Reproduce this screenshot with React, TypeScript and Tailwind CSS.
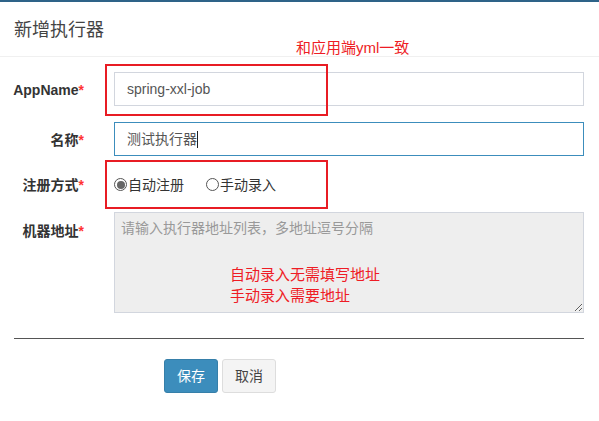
import React from "react";

const font = { fontFamily: '"Liberation Sans", "Noto Sans CJK SC", Arial, sans-serif' };

function Label({ children }: { children: React.ReactNode }) {
  return (
    <div className="w-[71px] shrink-0 text-right text-[14px] font-bold text-[#333] leading-[20px] whitespace-nowrap pt-[2px]">
      {children}
      <span className="text-[#f33]">*</span>
    </div>
  );
}

function Radio({ checked, label }: { checked?: boolean; label: string }) {
  return (
    <div className="flex items-center text-[14px] text-[#333] leading-[20px]">
      <span className="w-[13px] h-[13px] rounded-full border border-[#555] bg-white flex items-center justify-center mr-[1px]">
        {checked && <span className="w-[8px] h-[8px] rounded-full bg-[#666]" />}
      </span>
      {label}
    </div>
  );
}

export default function App() {
  return (
    <div className="relative w-[599px] h-[421px] bg-white overflow-hidden" style={font}>
      <div className="h-[2px] bg-[#2e6388]" />
      <div className="h-[55px] border-b border-[#f0f0f0] pl-[14px] flex items-center">
        <div className="text-[18px] text-[#444] leading-[24px] pt-[2px]">新增执行器</div>
      </div>

      <div className="pl-[13px] pr-[15px] pt-[15px]">
        <div className="flex items-center h-[34px]">
          <Label>AppName</Label>
          <div className="ml-[30px] flex-1 h-[34px] border border-[#d2d6de] flex items-center pl-[12px] text-[14px] text-[#555]">
            spring-xxl-job
          </div>
        </div>

        <div className="flex items-center h-[34px] mt-[16px]">
          <Label>名称</Label>
          <div className="ml-[30px] flex-1 h-[34px] border border-[#3c8dbc] flex items-center pl-[12px] text-[14px] text-[#555]">
            测试执行器<span className="inline-block w-[1px] h-[17px] bg-[#222]" />
          </div>
        </div>

        <div className="flex items-center h-[24px] mt-[16px]">
          <Label>注册方式</Label>
          <div className="ml-[30px] flex items-center gap-[22px] pt-[1px]">
            <Radio checked label="自动注册" />
            <Radio label="手动录入" />
          </div>
        </div>

        <div className="flex items-start mt-[16px]">
          <div className="pt-[7px]">
            <Label>机器地址</Label>
          </div>
          <textarea
            readOnly
            placeholder="请输入执行器地址列表，多地址逗号分隔"
            className="ml-[30px] flex-1 h-[101px] bg-[#eeeeee] border border-[#d2d6de] px-[6px] py-[5px] text-[14px] leading-[20px] text-[#555] placeholder:text-[#999] outline-none"
            style={font}
          />
        </div>

        <div className="mt-[25px] ml-[1px] h-[1px] bg-[#555]" />

        <div className="flex gap-[4px] mt-[20px] ml-[151px]">
          <button className="w-[54px] h-[34px] rounded-[3px] bg-[#3c8dbc] border border-[#367fa9] text-white text-[14px]">
            保存
          </button>
          <button className="w-[54px] h-[34px] rounded-[3px] bg-[#f4f4f4] border border-[#ddd] text-[#444] text-[14px]">
            取消
          </button>
        </div>
      </div>

      {/* annotations */}
      <div className="absolute left-[296px] top-[38px] text-[15px] leading-[20px] text-[#ee1c25] whitespace-nowrap">
        和应用端yml一致
      </div>
      <div className="absolute left-[105px] top-[64px] w-[223px] h-[52px] border-2 border-[#e81c24]" />
      <div className="absolute left-[105px] top-[160px] w-[223px] h-[49px] border-2 border-[#e81c24]" />
      <div className="absolute left-[230px] top-[264px] text-[15px] leading-[21px] text-[#ee1c25] whitespace-nowrap">
        <div>自动录入无需填写地址</div>
        <div>手动录入需要地址</div>
      </div>
    </div>
  );
}
